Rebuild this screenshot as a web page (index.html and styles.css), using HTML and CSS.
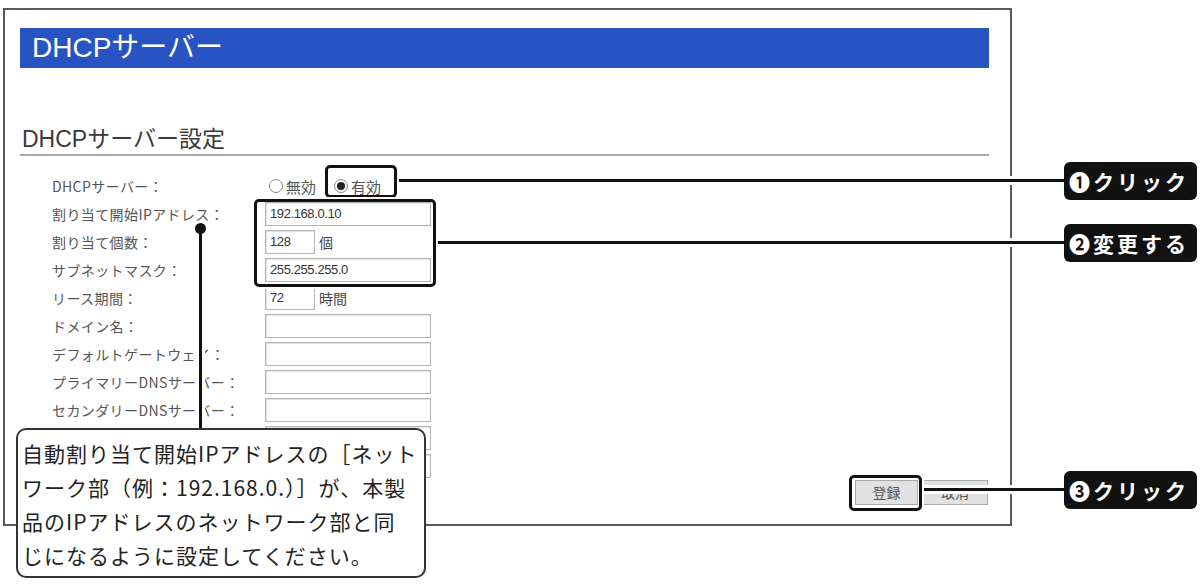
FILE: index.html
```html
<!DOCTYPE html>
<html lang="ja">

<head>
  <meta charset="UTF-8">
  <meta name="viewport" content="width=device-width, initial-scale=1.0">
  <title>DHCPサーバー</title>
  <link rel="stylesheet" href="styles.css">
</head>

<body>
  <div class="page">
    <div class="frame">
      <div class="title-bar">DHCPサーバー</div>
      <h2 class="section">DHCPサーバー設定</h2>

      <div class="form">
        <div class="row">
          <span class="label">DHCPサーバー：</span>
          <div class="field radios">
            <span class="radio"></span><span class="radio-text">無効</span>
            <span class="radio on"></span><span class="radio-text">有効</span>
          </div>
        </div>
        <div class="row">
          <span class="label">割り当て開始IPアドレス：</span>
          <div class="field"><span class="input">192.168.0.10</span></div>
        </div>
        <div class="row">
          <span class="label">割り当て個数：</span>
          <div class="field"><span class="input short">128</span><span class="unit">個</span></div>
        </div>
        <div class="row">
          <span class="label">サブネットマスク：</span>
          <div class="field"><span class="input">255.255.255.0</span></div>
        </div>
        <div class="row">
          <span class="label">リース期間：</span>
          <div class="field"><span class="input short">72</span><span class="unit">時間</span></div>
        </div>
        <div class="row">
          <span class="label">ドメイン名：</span>
          <div class="field"><span class="input"></span></div>
        </div>
        <div class="row">
          <span class="label">デフォルトゲートウェイ：</span>
          <div class="field"><span class="input"></span></div>
        </div>
        <div class="row">
          <span class="label">プライマリーDNSサーバー：</span>
          <div class="field"><span class="input"></span></div>
        </div>
        <div class="row">
          <span class="label">セカンダリーDNSサーバー：</span>
          <div class="field"><span class="input"></span></div>
        </div>
        <!-- 吹き出しの下に隠れる行 -->
        <div class="row">
          <span class="label"></span>
          <div class="field"><span class="input"></span></div>
        </div>
        <div class="row">
          <span class="label"></span>
          <div class="field"><span class="input"></span></div>
        </div>
      </div>

      <div class="buttons">
        <span class="btn">登録</span>
        <span class="btn wide">取消</span>
      </div>
    </div>

    <!-- 注釈 -->
    <div class="line line-1"></div>
    <div class="line line-2"></div>
    <div class="line line-3"></div>
    <div class="vline"></div>
    <div class="dot"></div>

    <div class="mark mark-radio"></div>
    <div class="mark mark-inputs"></div>
    <div class="mark mark-btn"></div>

    <div class="badge badge-1">❶クリック</div>
    <div class="badge badge-2">❷変更する</div>
    <div class="badge badge-3">❸クリック</div>

    <div class="callout">
      自動割り当て開始IPアドレスの［ネット<br>
      ワーク部（例：192.168.0.）］が、本製<br>
      品のIPアドレスのネットワーク部と同<br>
      じになるように設定してください。
    </div>
  </div>
</body>

</html>
```

FILE: styles.css
```css
* {
  margin: 0;
  padding: 0;
  box-sizing: border-box;
}

body {
  font-family: "Liberation Sans", "Noto Sans CJK JP", sans-serif;
  background: #ffffff;
}

.page {
  position: relative;
  width: 1204px;
  height: 585px;
  padding: 8px 0 0 3px;
  overflow: hidden;
}

.frame {
  width: 1009px;
  height: 518px;
  border: 2px solid #5a5a5a;
  padding: 18px 21px 0 15px;
}

.title-bar {
  height: 40px;
  background: #2854c3;
  color: #ffffff;
  font-size: 28px;
  line-height: 40px;
  padding-left: 12px;
}

.section {
  margin-top: 56px;
  height: 32px;
  line-height: 30px;
  font-size: 23px;
  font-weight: normal;
  color: #3a3a3a;
  padding-left: 2px;
  border-bottom: 2px solid #aaaaaa;
}

.form {
  margin-top: 16px;
  padding-left: 32px;
}

.row {
  display: grid;
  grid-template-columns: 213px 1fr;
  align-items: center;
  height: 28px;
}

.label {
  font-family: "Noto Sans CJK JP", sans-serif;
  font-size: 14px;
  letter-spacing: 0.4px;
  color: #555555;
}

.field {
  display: flex;
  align-items: center;
  font-family: "Noto Sans CJK JP", sans-serif;
  font-size: 14px;
  color: #444444;
}

.radios {
  padding-left: 4px;
  font-size: 15px;
  color: #555555;
}

.radio {
  width: 14px;
  height: 14px;
  border: 1px solid #888888;
  border-radius: 50%;
  margin-right: 3px;
  position: relative;
}

.radio.on {
  margin-left: 18px;
}

.radio.on::after {
  content: "";
  position: absolute;
  left: 2px;
  top: 2px;
  width: 8px;
  height: 8px;
  border-radius: 50%;
  background: #222222;
}

.input {
  width: 166px;
  height: 24px;
  border: 1px solid #b5b5b5;
  box-shadow: inset 1px 1px 0 #e4e4e4;
  font-family: "Liberation Sans", sans-serif;
  font-size: 13px;
  line-height: 22px;
  letter-spacing: -0.4px;
  padding-left: 4px;
  color: #333333;
}

.input.short {
  width: 50px;
}

.unit {
  margin-left: 4px;
}

.buttons {
  display: flex;
  justify-content: flex-end;
  gap: 4px;
  padding-right: 1px;
}

.btn {
  width: 63px;
  height: 25px;
  background: #e2e2e2;
  border: 1px solid #aaaaaa;
  font-family: "Noto Sans CJK JP", sans-serif;
  font-size: 14px;
  line-height: 23px;
  text-align: center;
  color: #555555;
}

.btn.wide {
  width: 66px;
}

/* 注釈の線 */
.line,
.vline {
  position: absolute;
  background: #111111;
  box-shadow: 0 0 0 3px #ffffff;
}

.line {
  height: 3px;
}

.line-1 {
  left: 397px;
  top: 179px;
  width: 667px;
}

.line-2 {
  left: 436px;
  top: 241px;
  width: 628px;
}

.line-3 {
  left: 922px;
  top: 488px;
  width: 142px;
}

.vline {
  left: 199px;
  top: 228px;
  width: 3px;
  height: 200px;
}

.dot {
  position: absolute;
  left: 195px;
  top: 223px;
  width: 11px;
  height: 11px;
  border-radius: 50%;
  background: #111111;
}

.mark {
  position: absolute;
  border: 3px solid #111111;
  border-radius: 5px;
  box-shadow: 0 0 0 2px #ffffff;
}

.mark-radio {
  left: 325px;
  top: 165px;
  width: 72px;
  height: 33px;
}

.mark-inputs {
  left: 254px;
  top: 199px;
  width: 182px;
  height: 88px;
}

.mark-btn {
  left: 849px;
  top: 475px;
  width: 73px;
  height: 36px;
}

.badge {
  position: absolute;
  left: 1064px;
  width: 133px;
  height: 38px;
  background: #111111;
  border-radius: 6px;
  color: #ffffff;
  font-family: "Noto Sans CJK JP", "DejaVu Sans", sans-serif;
  font-size: 21px;
  font-weight: bold;
  line-height: 38px;
  letter-spacing: 3px;
  padding-left: 5px;
  white-space: nowrap;
}

.badge-1 {
  top: 162px;
}

.badge-2 {
  top: 224px;
}

.badge-3 {
  top: 471px;
}

.callout {
  position: absolute;
  left: 16px;
  top: 428px;
  width: 410px;
  height: 150px;
  background: #ffffff;
  border: 2px solid #333333;
  border-radius: 10px;
  padding: 6px 0 0 4px;
  font-family: "Noto Sans CJK JP", sans-serif;
  font-size: 21px;
  line-height: 34px;
  letter-spacing: 1px;
  color: #222222;
  white-space: nowrap;
}
```
